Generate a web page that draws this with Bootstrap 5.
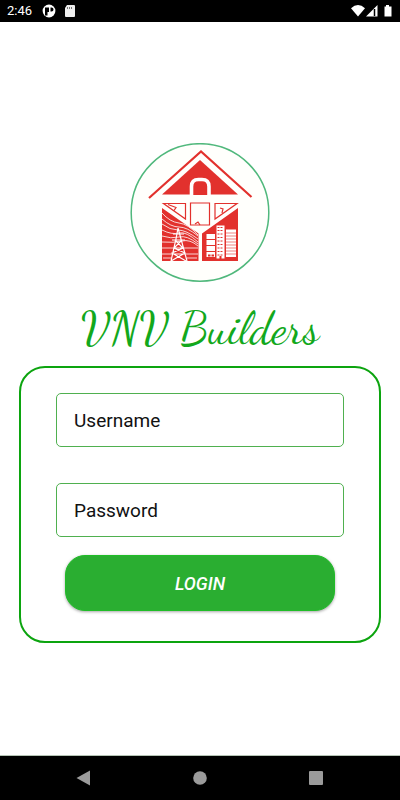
<!DOCTYPE html>
<html lang="en">
<head>
<meta charset="utf-8">
<meta name="viewport" content="width=device-width, initial-scale=1">
<title>VNV Builders</title>
<link href="https://cdn.jsdelivr.net/npm/bootstrap@5.3.0/dist/css/bootstrap.min.css" rel="stylesheet">
<style>
body { font-family: Roboto, sans-serif; background: #fff; }
.status-bar { height: 22px; font-size: 13px; line-height: 22px; padding: 0 7px; }
.system-nav { height: 45px; padding: 0 76px; border-top: 1px solid #b5c4b5; }
.system-nav .btn { line-height: 0; }
.screen { padding: 8px 19px 0; }
.emblem { width: 140px; height: 140px; }
.brand { font-family: "Dancing Script", "Liberation Serif", cursive; font-weight: 400; font-size: 46px; line-height: 52px; color: #12a81c; margin: 20px 0 11px; }
.login-box { border: 2px solid #0ca40f; border-radius: 26px; padding: 25px 35px 30px; }
.login-box .form-control { height: 54px; border: 1px solid #4fb04f; border-radius: 5px; padding: 2px 17px 0; font-size: 19px; color: #111; }
.login-box .form-control::placeholder { color: #111; opacity: 1; }
.field-gap { margin-bottom: 36px; }
.btn-login { height: 56px; margin: 18px 9px 0; padding: 8px 12px 6px; background: #2aae31; border: 1px solid #1fbd27; border-radius: 20px; color: #fff; font-size: 18px; font-weight: 500; font-style: italic; box-shadow: 0 1px 3px rgba(0,0,0,.35); }
.btn-login:hover { background: #23992a; color: #fff; }
</style>
<script src="https://cdn.jsdelivr.net/npm/bootstrap@5.3.0/dist/js/bootstrap.bundle.min.js"></script>
</head>
<body class="d-flex flex-column min-vh-100">
<header class="status-bar bg-black text-white d-flex align-items-center">
  <span>2:46</span>
  <svg class="ms-2" width="36" height="16" viewBox="0 0 36 16" aria-hidden="true">
    <circle cx="9" cy="8" r="6.400" fill="#fff"/>
    <path d="M5 4.500h4v4.500H7.500v3.500H5zM10.500 4.500h1a2 2 0 0 1 0 4h-1z" fill="#000"/>
    <path d="M27 2h7a1 1 0 0 1 1 1v10a1 1 0 0 1-1 1h-8a1 1 0 0 1-1-1V5z" fill="#eee"/>
    <path d="M27.500 4v2M29.500 4v2M31.500 4v2" stroke="#777"/>
  </svg>
  <svg class="ms-auto" width="42" height="16" viewBox="0 0 42 16" aria-hidden="true">
    <path d="M0 5.200Q7-1 14 5.200L7 13.500z" fill="#fff"/>
    <path d="M26.500 2v11.500H15z" fill="#fff"/>
    <path d="M23.500 6v7" stroke="#000" stroke-width="1.500"/>
    <path d="M35 2h3v1.500h2.500V13.500h-7V3.500H35z" fill="#fff"/>
  </svg>
</header>

<main class="screen flex-grow-1 d-flex flex-column justify-content-center">
  <svg class="emblem d-block mx-auto" viewBox="130 143 140 140" role="img" aria-label="VNV Builders emblem">
    <circle cx="200" cy="212.500" r="68.800" fill="#fffffc" stroke="#50b87c" stroke-width="1.500"/>
    <g fill="#e2312d">
      <path d="M149 198L201 151.500L251.500 197" fill="none" stroke="#e2312d" stroke-width="2.200"/>
      <path d="M200 160L238 194.500H162z"/>
      <path d="M191.500 195v-8.500q0-7 7-7h3.500q7 0 7 7v8.500" stroke="#fff" stroke-width="3.600"/>
      <path d="M162 208l36.500 25.500v27.500H162zM238 208l-36 25.500v27.500h36z"/>
    </g>
    <g fill="none" stroke="#e2312d" stroke-width="1.200">
      <path d="M163.500 203.500h22v15.500zM190.500 203h19v22h-19zM215 203.500h22L215 219z"/>
      <path d="M168 204.500l8 3-2 3M195 224l3-2 2 3M220 208l3 1-1 4"/>
    </g>
    <g fill="none" stroke="#fff" stroke-width=".8">
      <path d="M162 213q8 9 17 10t19 12M162 219q9 8 17 8t19 9M162 224q8 6 16 6t20 9M162 230q10 5 17 3t19 9M162 236q9 3 17 1t19 7M162 242q12 1 20-1t16 5M162 248h12M184 248h14M162 254h10M186 254h12M163 258h8M187 258h10"/>
      <path stroke-width="1.200" d="M178 228l-2 11-5 22M178 228l3 11 6 22M173 234h11M172 240h13M175 240l8 8-11 5 14 8M182 240l-8 8 11 5-14 8M174 248h9M173 254h12"/>
    </g>
    <g fill="#fff">
      <path d="M206.500 234h8.500v5h-8.500zM206.500 240h8.500v5h-8.500zM206.500 246h8.500v5h-8.500zM206.500 252h8.500v5h-8.500z"/>
      <path d="M216.500 225.500h8v33h-8zM226 229.500h10v27.500h-10z"/>
    </g>
    <g fill="none" stroke="#e2312d">
      <path stroke-dasharray="2 1" d="M217.500 227.500h6M217.500 230.500h6M217.500 234h6M217.500 237.500h6M217.500 241h6M217.500 244.500h6M217.500 248h6M217.500 251.500h6M217.500 255h6"/>
      <path stroke-width=".6" d="M226 233h10M226 236h10M226 239h10M226 242h10M226 245h10M226 248h10M226 251h10M226 254h10"/>
      <path stroke-width="2" d="M208 255.500h2.500M211.500 255.500h2.500M220.500 256v3"/>
    </g>
  </svg>
  <h1 class="brand text-center">VNV Builders</h1>
  <form class="login-box">
    <input class="form-control field-gap" type="text" name="username" placeholder="Username" aria-label="Username" autocomplete="username">
    <input class="form-control" type="password" name="password" placeholder="Password" aria-label="Password" autocomplete="current-password">
    <div class="d-grid">
      <button class="btn btn-login" type="submit">LOGIN</button>
    </div>
  </form>
</main>

<nav class="system-nav bg-black d-flex justify-content-between align-items-center" aria-label="System navigation">
  <button class="btn p-0 border-0" type="button" aria-label="Back"><svg width="15" height="16" viewBox="0 0 15 16"><path d="M14 .5v15L.5 8z" fill="#9b9b9b"/></svg></button>
  <button class="btn p-0 border-0" type="button" aria-label="Home"><svg width="16" height="16" viewBox="0 0 16 16"><circle cx="8" cy="8" r="6.800" fill="#9b9b9b"/></svg></button>
  <button class="btn p-0 border-0" type="button" aria-label="Recent apps"><svg width="16" height="16" viewBox="0 0 16 16"><rect x="1" y="1" width="14" height="14" rx="1" fill="#9b9b9b"/></svg></button>
</nav>
</body>
</html>
